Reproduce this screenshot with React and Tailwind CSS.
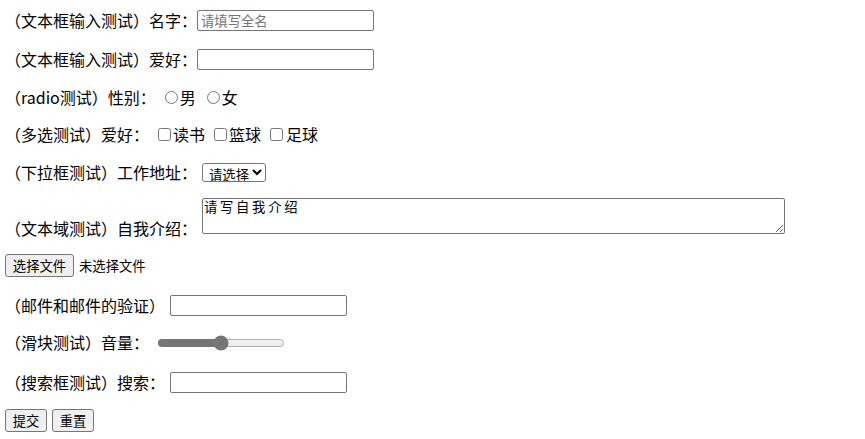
import React from 'react';

const inputCls =
  "w-[177px] h-[21px] border border-[#767676] rounded-[2px] px-[3px] text-[13.33px] leading-[17px] bg-white outline-none placeholder:text-[#757575]";
const btnCls =
  "h-[23px] border border-[#767676] rounded-[3px] bg-[#efefef] text-[13.33px] leading-[19px] text-black flex items-center justify-center";

export default function App() {
  return (
    <form className="w-[865px] h-[439px] bg-white text-black font-['Noto_Sans_CJK_SC',sans-serif] text-[16px] leading-[21px] flex flex-col px-[5px] pt-[10px]">
      {/* 文本框 */}
      <div className="flex items-center h-[21px]">
        <span>（文本框输入测试）名字：</span>
        <input type="text" placeholder="请填写全名" className={inputCls} />
      </div>

      <div className="flex items-center h-[21px] mt-[18px]">
        <span>（文本框输入测试）爱好：</span>
        <input type="text" className={inputCls} />
      </div>

      {/* radio */}
      <div className="flex items-center h-[21px] mt-[17px]">
        <span>（radio测试）性别：</span>
        <input type="radio" name="sex" className="w-[13px] h-[13px] m-0 ml-[9px] accent-[#767676]" />
        <span className="ml-[2px]">男</span>
        <input type="radio" name="sex" className="w-[13px] h-[13px] m-0 ml-[11px] accent-[#767676]" />
        <span className="ml-[2px]">女</span>
      </div>

      {/* 多选 */}
      <div className="flex items-center h-[21px] mt-[16px]">
        <span>（多选测试）爱好：</span>
        <input type="checkbox" className="w-[13px] h-[13px] m-0 ml-[9px]" />
        <span className="ml-[2px]">读书</span>
        <input type="checkbox" className="w-[13px] h-[13px] m-0 ml-[9px]" />
        <span className="ml-[2px]">篮球</span>
        <input type="checkbox" className="w-[13px] h-[13px] m-0 ml-[9px]" />
        <span className="ml-[3px]">足球</span>
      </div>

      {/* 下拉框 */}
      <div className="flex items-center h-[21px] mt-[17px]">
        <span>（下拉框测试）工作地址：</span>
        <select className="ml-[5px] w-[64px] h-[19px] border border-[#767676] rounded-[3px] bg-white text-[13.33px] leading-[17px] pl-[2px] outline-none">
          <option>请选择</option>
          <option>北京</option>
          <option>上海</option>
        </select>
      </div>

      {/* 文本域 */}
      <div className="flex items-start mt-[15px]">
        <span className="mt-[20px]">（文本域测试）自我介绍：</span>
        <textarea
          defaultValue="请写自我介绍"
          className="ml-[5px] w-[583px] h-[36px] border border-[#767676] rounded-[2px] px-[1px] py-[1px] text-[13.33px] leading-[17px] tracking-[2.7px] font-['Liberation_Mono','Noto_Sans_CJK_SC',monospace] outline-none"
        />
      </div>

      {/* 文件 */}
      <div className="flex items-center h-[22px] mt-[15px]">
        <button type="button" className={`${btnCls} w-[69px] h-[22px]`}>选择文件</button>
        <span className="ml-[5px] text-[13.33px]">未选择文件</span>
      </div>

      {/* 邮件 */}
      <div className="flex items-center h-[21px] mt-[19px]">
        <span>（邮件和邮件的验证）</span>
        <input type="email" className={`${inputCls} ml-[5px]`} />
      </div>

      {/* 滑块 */}
      <div className="flex items-center h-[21px] mt-[16px]">
        <span>（滑块测试）音量：</span>
        <input type="range" defaultValue="50" className="ml-[8px] w-[128px] h-[16px] m-0 accent-[#767676]" />
      </div>

      {/* 搜索 */}
      <div className="flex items-center h-[21px] mt-[19px]">
        <span>（搜索框测试）搜索：</span>
        <input type="search" className={`${inputCls} ml-[5px]`} />
      </div>

      {/* 按钮 */}
      <div className="flex items-center gap-[5px] mt-[16px]">
        <button type="submit" className={`${btnCls} w-[42px]`}>提交</button>
        <button type="reset" className={`${btnCls} w-[42px]`}>重置</button>
      </div>
    </form>
  );
}
